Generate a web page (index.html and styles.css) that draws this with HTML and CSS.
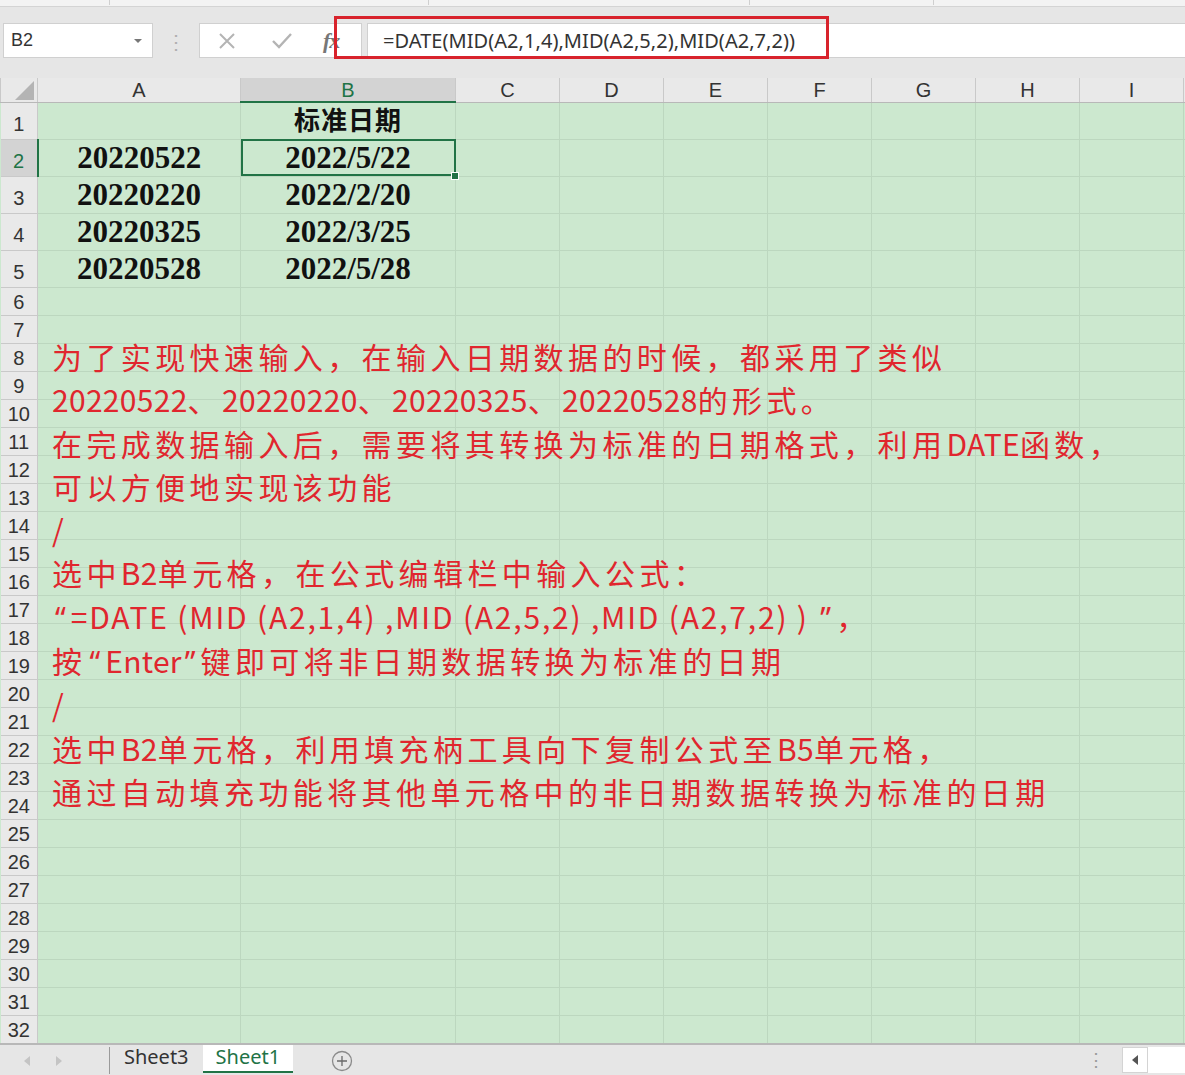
FILE: index.html
```html
<!DOCTYPE html>
<html lang="zh-CN">

<head>
    <meta charset="UTF-8">
    <meta name="viewport" content="width=device-width, initial-scale=1.0">
    <title>DATE函数 - 标准日期</title>
    <link rel="stylesheet" href="styles.css">
</head>

<body>
    <div class="ribbon-edge">
        <span class="ribbon-group"></span>
        <span class="ribbon-group"></span>
        <span class="ribbon-group"></span>
        <span class="ribbon-group"></span>
        <span class="ribbon-group"></span>
    </div>

    <div class="formula-bar">
        <div class="name-box">
            <span>B2</span>
            <span class="name-arrow"></span>
        </div>
        <div class="bar-dots">⋮</div>
        <div class="bar-buttons">
            <svg class="bar-icon" width="20" height="20" viewBox="0 0 20 20">
                <path d="M3 3 L17 17 M17 3 L3 17" stroke="#b4b4b4" stroke-width="2" fill="none" />
            </svg>
            <svg class="bar-icon" width="22" height="20" viewBox="0 0 22 20">
                <path d="M2 10 L8 16 L20 3" stroke="#b4b4b4" stroke-width="2.4" fill="none" />
            </svg>
            <span class="fx">fx</span>
        </div>
        <div class="formula-input">=DATE(MID(A2,1,4),MID(A2,5,2),MID(A2,7,2))</div>
        <div class="formula-mark"></div>
    </div>

    <div class="sheet">
        <table class="grid">
            <colgroup>
                <col class="col-head">
                <col class="col-a">
                <col class="col-b">
                <col class="col-n">
                <col class="col-n">
                <col class="col-n">
                <col class="col-n">
                <col class="col-n">
                <col class="col-n">
                <col class="col-n">
                <col class="col-rest">
            </colgroup>
            <thead>
                <tr>
                    <th class="corner"><span class="corner-tri"></span></th>
                    <th>A</th>
                    <th class="active-col">B</th>
                    <th>C</th>
                    <th>D</th>
                    <th>E</th>
                    <th>F</th>
                    <th>G</th>
                    <th>H</th>
                    <th>I</th>
                    <th></th>
                </tr>
            </thead>
            <tbody>
                <tr class="tall"><th>1</th><td></td><td class="title"><span>标准日期</span></td><td></td><td></td><td></td><td></td><td></td><td></td><td></td><td></td></tr>
                <tr class="tall"><th class="active-row">2</th><td class="num">20220522</td><td class="num selected">2022/5/22<span class="handle"></span></td><td></td><td></td><td></td><td></td><td></td><td></td><td></td><td></td></tr>
                <tr class="tall"><th>3</th><td class="num">20220220</td><td class="num">2022/2/20</td><td></td><td></td><td></td><td></td><td></td><td></td><td></td><td></td></tr>
                <tr class="tall"><th>4</th><td class="num">20220325</td><td class="num">2022/3/25</td><td></td><td></td><td></td><td></td><td></td><td></td><td></td><td></td></tr>
                <tr class="tall"><th>5</th><td class="num">20220528</td><td class="num">2022/5/28</td><td></td><td></td><td></td><td></td><td></td><td></td><td></td><td></td></tr>
                <tr><th>6</th><td></td><td></td><td></td><td></td><td></td><td></td><td></td><td></td><td></td><td></td></tr>
                <tr><th>7</th><td></td><td></td><td></td><td></td><td></td><td></td><td></td><td></td><td></td><td></td></tr>
                <tr><th>8</th><td></td><td></td><td></td><td></td><td></td><td></td><td></td><td></td><td></td><td></td></tr>
                <tr><th>9</th><td></td><td></td><td></td><td></td><td></td><td></td><td></td><td></td><td></td><td></td></tr>
                <tr><th>10</th><td></td><td></td><td></td><td></td><td></td><td></td><td></td><td></td><td></td><td></td></tr>
                <tr><th>11</th><td></td><td></td><td></td><td></td><td></td><td></td><td></td><td></td><td></td><td></td></tr>
                <tr><th>12</th><td></td><td></td><td></td><td></td><td></td><td></td><td></td><td></td><td></td><td></td></tr>
                <tr><th>13</th><td></td><td></td><td></td><td></td><td></td><td></td><td></td><td></td><td></td><td></td></tr>
                <tr><th>14</th><td></td><td></td><td></td><td></td><td></td><td></td><td></td><td></td><td></td><td></td></tr>
                <tr><th>15</th><td></td><td></td><td></td><td></td><td></td><td></td><td></td><td></td><td></td><td></td></tr>
                <tr><th>16</th><td></td><td></td><td></td><td></td><td></td><td></td><td></td><td></td><td></td><td></td></tr>
                <tr><th>17</th><td></td><td></td><td></td><td></td><td></td><td></td><td></td><td></td><td></td><td></td></tr>
                <tr><th>18</th><td></td><td></td><td></td><td></td><td></td><td></td><td></td><td></td><td></td><td></td></tr>
                <tr><th>19</th><td></td><td></td><td></td><td></td><td></td><td></td><td></td><td></td><td></td><td></td></tr>
                <tr><th>20</th><td></td><td></td><td></td><td></td><td></td><td></td><td></td><td></td><td></td><td></td></tr>
                <tr><th>21</th><td></td><td></td><td></td><td></td><td></td><td></td><td></td><td></td><td></td><td></td></tr>
                <tr><th>22</th><td></td><td></td><td></td><td></td><td></td><td></td><td></td><td></td><td></td><td></td></tr>
                <tr><th>23</th><td></td><td></td><td></td><td></td><td></td><td></td><td></td><td></td><td></td><td></td></tr>
                <tr><th>24</th><td></td><td></td><td></td><td></td><td></td><td></td><td></td><td></td><td></td><td></td></tr>
                <tr><th>25</th><td></td><td></td><td></td><td></td><td></td><td></td><td></td><td></td><td></td><td></td></tr>
                <tr><th>26</th><td></td><td></td><td></td><td></td><td></td><td></td><td></td><td></td><td></td><td></td></tr>
                <tr><th>27</th><td></td><td></td><td></td><td></td><td></td><td></td><td></td><td></td><td></td><td></td></tr>
                <tr><th>28</th><td></td><td></td><td></td><td></td><td></td><td></td><td></td><td></td><td></td><td></td></tr>
                <tr><th>29</th><td></td><td></td><td></td><td></td><td></td><td></td><td></td><td></td><td></td><td></td></tr>
                <tr><th>30</th><td></td><td></td><td></td><td></td><td></td><td></td><td></td><td></td><td></td><td></td></tr>
                <tr><th>31</th><td></td><td></td><td></td><td></td><td></td><td></td><td></td><td></td><td></td><td></td></tr>
                <tr><th>32</th><td></td><td></td><td></td><td></td><td></td><td></td><td></td><td></td><td></td><td></td></tr>
            </tbody>
        </table>

        <!-- floating text box over the cells -->
        <div class="note">
            <p>为了实现快速输入，在输入日期数据的时候，都采用了类似</p>
            <p><span class="lat">20220522</span>、<span class="lat">20220220</span>、<span class="lat">20220325</span>、<span class="lat">20220528</span>的形式。</p>
            <p>在完成数据输入后，需要将其转换为标准的日期格式，利用<span class="lat">DATE</span>函数，</p>
            <p>可以方便地实现该功能</p>
            <p>/</p>
            <p>选中<span class="lat">B2</span>单元格，在公式编辑栏中输入公式：</p>
            <p><span class="quote">“</span><span class="lat formula">=DATE (MID (A2,1,4) ,MID (A2,5,2) ,MID (A2,7,2) ) </span><span class="quote">”</span>，</p>
            <p>按<span class="quote">“</span><span class="lat">Enter</span><span class="quote">”</span>键即可将非日期数据转换为标准的日期</p>
            <p>/</p>
            <p>选中<span class="lat">B2</span>单元格，利用填充柄工具向下复制公式至<span class="lat">B5</span>单元格，</p>
            <p>通过自动填充功能将其他单元格中的非日期数据转换为标准的日期</p>
        </div>
    </div>

    <div class="tabs">
        <div class="tab-nav">
            <span class="nav-arrow nav-left"></span>
            <span class="nav-arrow nav-right"></span>
        </div>
        <div class="tab">Sheet3</div>
        <div class="tab active">Sheet1</div>
        <div class="tab-add">
            <svg width="22" height="22" viewBox="0 0 22 22">
                <circle cx="11" cy="11" r="9.5" stroke="#8a8a8a" stroke-width="1.3" fill="none" />
                <path d="M11 6 V16 M6 11 H16" stroke="#6a6a6a" stroke-width="1.3" />
            </svg>
        </div>
        <div class="tab-spacer"></div>
        <div class="tab-dots">⋮</div>
        <div class="scroll-box">
            <span class="scroll-left"></span>
        </div>
        <div class="scroll-track"></div>
    </div>
</body>

</html>
```

FILE: styles.css
```css
body {
    margin: 0;
    width: 1185px;
    height: 1075px;
    overflow: hidden;
    background-color: #e6e6e6;
    font-family: "Noto Sans CJK SC", "Liberation Sans", sans-serif;
    color: #333;
}

/* ---------- ribbon remnant ---------- */

.ribbon-edge {
    display: flex;
    height: 6px;
    background-color: #f3f3f3;
    border-bottom: 1px solid #d4d4d4;
}

.ribbon-group {
    height: 5px;
    border-right: 1px solid #cfcfcf;
}

.ribbon-group:nth-child(1) { width: 109px; }
.ribbon-group:nth-child(2) { width: 318px; }
.ribbon-group:nth-child(3) { width: 320px; }
.ribbon-group:nth-child(4) { width: 183px; }
.ribbon-group:nth-child(5) { flex: 1; border-right: none; }

/* ---------- formula bar ---------- */

.formula-bar {
    position: relative;
    display: flex;
    align-items: stretch;
    height: 35px;
    padding: 16px 0 20px 3px;
    background-color: #e6e6e6;
}

.name-box {
    display: flex;
    align-items: center;
    justify-content: space-between;
    width: 150px;
    padding: 0 10px 0 7px;
    box-sizing: border-box;
    background-color: #fff;
    border: 1px solid #d0d0d0;
    font-family: "Liberation Sans", sans-serif;
    font-size: 18px;
    color: #333;
}

.name-arrow {
    width: 0;
    height: 0;
    border-left: 4px solid transparent;
    border-right: 4px solid transparent;
    border-top: 4px solid #777;
}

.bar-dots {
    width: 46px;
    text-align: center;
    line-height: 35px;
    font-size: 20px;
    color: #b0b0b0;
}

.bar-buttons {
    display: flex;
    align-items: center;
    width: 163px;
    box-sizing: border-box;
    padding-left: 17px;
    gap: 34px;
    background-color: #fff;
    border: 1px solid #d0d0d0;
}

.fx {
    margin-left: -4px;
    font-family: "Liberation Serif", serif;
    font-style: italic;
    font-weight: bold;
    font-size: 22px;
    color: #777;
    letter-spacing: -1px;
}

.formula-input {
    flex: 1;
    margin-left: 5px;
    padding-left: 15px;
    background-color: #fff;
    border: 1px solid #d0d0d0;
    border-right: none;
    line-height: 33px;
    font-family: "Noto Sans", "Liberation Sans", sans-serif;
    font-size: 20px;
    letter-spacing: 0.05px;
    color: #333;
}

.formula-mark {
    position: absolute;
    left: 334px;
    top: 9px;
    width: 495px;
    height: 43px;
    box-sizing: border-box;
    border: 3px solid #d8232c;
}

/* ---------- sheet grid ---------- */

.sheet {
    position: relative;
    height: 965px;
    overflow: hidden;
}

.grid {
    width: 1185px;
    table-layout: fixed;
    border-collapse: collapse;
    background-color: #cce8cf;
}

.col-head { width: 37px; }
.col-a { width: 203px; }
.col-b { width: 215px; }
.col-n { width: 104px; }
.col-rest { width: 2px; }

.grid th {
    padding: 0;
    background-color: #e9e9e9;
    border: 1px solid #c9c9c9;
    font-family: "Liberation Sans", sans-serif;
    font-weight: normal;
    font-size: 20px;
    line-height: 22px;
    color: #333;
}

.grid thead tr {
    height: 24px;
}

.grid thead th {
    border-top: none;
    border-bottom: 1px solid #b8b8b8;
}

.grid tbody th {
    text-align: center;
    vertical-align: bottom;
    padding-bottom: 2px;
    border-left: none;
}

.grid tbody tr {
    height: 28px;
}

.grid tbody tr.tall {
    height: 37px;
}

.grid tbody tr.tall th {
    vertical-align: middle;
    padding-bottom: 0;
    padding-top: 6px;
}

.grid td {
    padding: 0;
    border: 1px solid #bcd7bf;
    line-height: 30px;
}

.corner {
    position: relative;
}

.corner-tri {
    position: absolute;
    right: 3px;
    bottom: 2px;
    width: 0;
    height: 0;
    border-left: 19px solid transparent;
    border-bottom: 19px solid #b4b4b4;
}

.active-col {
    background-color: #d3d3d3 !important;
    color: #217346 !important;
    border-bottom: 2px solid #217346 !important;
}

.active-row {
    background-color: #d3d3d3 !important;
    color: #217346 !important;
    border-right: 2px solid #217346 !important;
}

.num {
    text-align: center;
    font-family: "Liberation Serif", serif;
    font-weight: bold;
    font-size: 31px;
    color: #111;
}

.title {
    text-align: center;
    font-family: "Noto Sans CJK SC", sans-serif;
    font-weight: bold;
    font-size: 26px;
    letter-spacing: 1px;
    color: #111;
}

.title span {
    position: relative;
    top: -2px;
}

.selected {
    position: relative;
    outline: 2px solid #217346;
    outline-offset: -2px;
}

.handle {
    position: absolute;
    right: -4px;
    bottom: -4px;
    width: 6px;
    height: 6px;
    background-color: #217346;
    border: 1px solid #fff;
}

/* ---------- red note box ---------- */

.note {
    position: absolute;
    left: 52px;
    top: 257px;
    font-family: "Noto Sans CJK SC", sans-serif;
    font-size: 30px;
    line-height: 43.3px;
    letter-spacing: 4.4px;
    color: #e0262e;
    white-space: nowrap;
}

.note p {
    margin: 0;
}

.lat {
    letter-spacing: 0.3px;
}

.formula {
    letter-spacing: 1.8px;
}

.quote {
    font-family: "Noto Sans", sans-serif;
    letter-spacing: 0;
    padding: 0 5px 0 3px;
}

/* ---------- sheet tabs ---------- */

.tabs {
    display: flex;
    align-items: stretch;
    height: 31px;
    border-top: 2px solid #b8b8b8;
    background-color: #e6e6e6;
    font-family: "Noto Sans", "Liberation Sans", sans-serif;
    font-size: 20px;
}

.tab-nav {
    display: flex;
    align-items: center;
    gap: 26px;
    width: 110px;
    padding-left: 24px;
    box-sizing: border-box;
    border-right: 1px solid #9a9a9a;
    margin: 2px 0 2px 0;
}

.nav-arrow {
    width: 0;
    height: 0;
    border-top: 5px solid transparent;
    border-bottom: 5px solid transparent;
}

.nav-left {
    border-right: 6px solid #c4c4c4;
}

.nav-right {
    border-left: 6px solid #c4c4c4;
}

.tab {
    padding: 0 14px;
    line-height: 24px;
    color: #333;
}

.tab.active {
    line-height: 24px;
    padding: 0 13px 0 13px;
    background-color: #fff;
    color: #217346;
    border-bottom: 2px solid #217346;
    margin-bottom: 3px;
}

.tab-add {
    display: flex;
    align-items: center;
    margin-left: 38px;
}

.tab-spacer {
    flex: 1;
}

.tab-dots {
    width: 20px;
    line-height: 29px;
    font-size: 18px;
    color: #9a9a9a;
    text-align: center;
    margin-right: 16px;
}

.scroll-box {
    display: flex;
    align-items: center;
    justify-content: center;
    width: 24px;
    margin: 2px 0 3px 0;
    background-color: #fff;
    border: 1px solid #d4d4d4;
}

.scroll-left {
    width: 0;
    height: 0;
    border-top: 5px solid transparent;
    border-bottom: 5px solid transparent;
    border-right: 6px solid #555;
}

.scroll-track {
    width: 37px;
    margin: 2px 0 3px 0;
    background-color: #fff;
}
```
